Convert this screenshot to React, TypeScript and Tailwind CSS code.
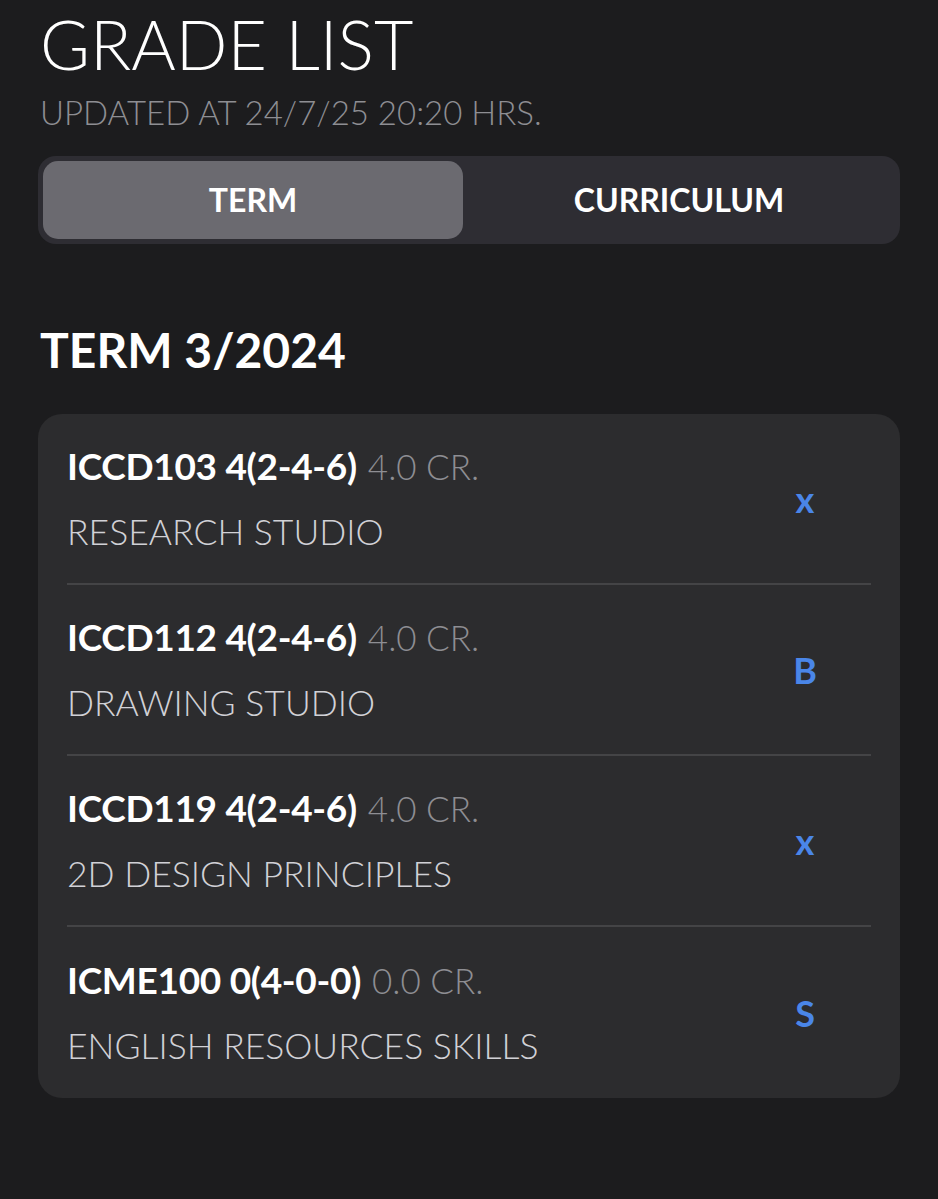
import React from 'react';

const courses = [
  { code: 'ICCD103 4(2-4-6)', credit: '4.0 CR.', name: 'RESEARCH STUDIO', grade: 'x' },
  { code: 'ICCD112 4(2-4-6)', credit: '4.0 CR.', name: 'DRAWING STUDIO', grade: 'B' },
  { code: 'ICCD119 4(2-4-6)', credit: '4.0 CR.', name: '2D DESIGN PRINCIPLES', grade: 'x' },
  { code: 'ICME100 0(4-0-0)', credit: '0.0 CR.', name: 'ENGLISH RESOURCES SKILLS', grade: 'S' },
];

const CourseRow = ({ code, credit, name, grade, last }: { code: string; credit: string; name: string; grade: string; last: boolean }) => (
  <div className={`flex items-center h-[171px] ${last ? '' : 'border-b-2 border-[#444446]'}`}>
    <div className="flex-1 flex flex-col gap-[14px]">
      <div className="leading-[44px] whitespace-nowrap">
        <span className="text-[37px] font-bold text-white tracking-[-0.3px]">{code}</span>
        <span className="ml-[11px] text-[35px] font-light text-[#8e8e93]">{credit}</span>
      </div>
      <div className="text-[35.5px] leading-[44px] font-light text-[#d1d1d6]">{name}</div>
    </div>
    <div className="w-[72px] mr-[30px] text-center text-[36px] font-bold text-[#4a86e8]">{grade}</div>
  </div>
);

export default function App() {
  return (
    <div className="min-h-[1199px] bg-[#1c1c1e] px-[38px] pt-[2px] text-white" style={{ fontFamily: 'Lato, "Noto Sans", sans-serif' }}>
      <h1 className="text-[68px] leading-[84px] font-light pl-[2px]">GRADE LIST</h1>
      <p className="mt-[6px] text-[33px] leading-[40px] font-light text-[#8e8e93] pl-[2px]">UPDATED AT 24/7/25 20:20 HRS.</p>

      <div className="mt-[24px] h-[88px] rounded-[18px] bg-[#2e2d33] p-[5px] flex">
        <div className="w-[420px] rounded-[15px] bg-[#6b6a70] flex items-center justify-center text-[32px] font-bold">TERM</div>
        <div className="flex-1 flex items-center justify-center text-[32px] font-bold">CURRICULUM</div>
      </div>

      <h2 className="mt-[78px] text-[48px] leading-[56px] font-bold pl-[2px]">TERM 3/2024</h2>

      <div className="mt-[36px] rounded-[24px] bg-[#2c2c2e] pl-[29px] pr-[29px]">
        {courses.map((c, i) => (
          <CourseRow key={i} {...c} last={i === courses.length - 1} />
        ))}
      </div>
    </div>
  );
}
